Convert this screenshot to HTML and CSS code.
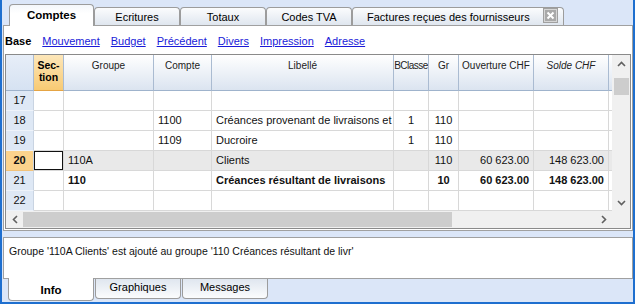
FILE: index.html
```html
<!DOCTYPE html>
<html lang="fr">
<head>
    <meta charset="UTF-8">
    <title>Comptes</title>
    <link rel="stylesheet" href="styles.css">
</head>
<body>
    <div class="window">
        <div class="tabs">
            <div class="tab active">Comptes</div>
            <div class="tab">Ecritures</div>
            <div class="tab">Totaux</div>
            <div class="tab">Codes TVA</div>
            <div class="tab wide">
                <span class="tab-label">Factures reçues des fournisseurs</span>
                <span class="close">
                    <svg width="9" height="9" viewBox="0 0 9 9"><path d="M1.5 1.5 L7.5 7.5 M7.5 1.5 L1.5 7.5" stroke="#fff" stroke-width="2"/></svg>
                </span>
            </div>
        </div>

        <div class="panel">
            <div class="links">
                <b>Base</b>
                <a href="#">Mouvement</a>
                <a href="#">Budget</a>
                <a href="#">Précédent</a>
                <a href="#">Divers</a>
                <a href="#">Impression</a>
                <a href="#">Adresse</a>
            </div>

            <div class="grid">
                <div class="grid-main">
                    <div class="sheet">
                        <div class="row head">
                            <div class="cell rh"></div>
                            <div class="cell sect"><b>Sec-<br>tion</b></div>
                            <div class="cell">Groupe</div>
                            <div class="cell">Compte</div>
                            <div class="cell">Libellé</div>
                            <div class="cell narrow">BClasse</div>
                            <div class="cell">Gr</div>
                            <div class="cell">Ouverture CHF</div>
                            <div class="cell"><i>Solde CHF</i></div>
                            <div class="cell fill"></div>
                        </div>
                        <div class="row">
                            <div class="cell rh">17</div>
                            <div class="cell"></div>
                            <div class="cell"></div>
                            <div class="cell"></div>
                            <div class="cell"></div>
                            <div class="cell c"></div>
                            <div class="cell c"></div>
                            <div class="cell r"></div>
                            <div class="cell r"></div>
                            <div class="cell fill"></div>
                        </div>
                        <div class="row">
                            <div class="cell rh">18</div>
                            <div class="cell"></div>
                            <div class="cell"></div>
                            <div class="cell">1100</div>
                            <div class="cell">Créances provenant de livraisons et</div>
                            <div class="cell c">1</div>
                            <div class="cell c">110</div>
                            <div class="cell r"></div>
                            <div class="cell r"></div>
                            <div class="cell fill"></div>
                        </div>
                        <div class="row">
                            <div class="cell rh">19</div>
                            <div class="cell"></div>
                            <div class="cell"></div>
                            <div class="cell">1109</div>
                            <div class="cell">Ducroire</div>
                            <div class="cell c">1</div>
                            <div class="cell c">110</div>
                            <div class="cell r"></div>
                            <div class="cell r"></div>
                            <div class="cell fill"></div>
                        </div>
                        <div class="row current">
                            <div class="cell rh">20</div>
                            <div class="cell cursor"></div>
                            <div class="cell">110A</div>
                            <div class="cell"></div>
                            <div class="cell">Clients</div>
                            <div class="cell c"></div>
                            <div class="cell c">110</div>
                            <div class="cell r">60 623.00</div>
                            <div class="cell r">148 623.00</div>
                            <div class="cell fill"></div>
                        </div>
                        <div class="row total">
                            <div class="cell rh">21</div>
                            <div class="cell"></div>
                            <div class="cell">110</div>
                            <div class="cell"></div>
                            <div class="cell">Créances résultant de livraisons</div>
                            <div class="cell c"></div>
                            <div class="cell c">10</div>
                            <div class="cell r">60 623.00</div>
                            <div class="cell r">148 623.00</div>
                            <div class="cell fill"></div>
                        </div>
                        <div class="row">
                            <div class="cell rh">22</div>
                            <div class="cell"></div>
                            <div class="cell"></div>
                            <div class="cell"></div>
                            <div class="cell"></div>
                            <div class="cell c"></div>
                            <div class="cell c"></div>
                            <div class="cell r"></div>
                            <div class="cell r"></div>
                            <div class="cell fill"></div>
                        </div>
                    </div>
                    <div class="vscroll">
                        <span class="arrow">
                            <svg width="9" height="6" viewBox="0 0 9 6"><polyline points="1,5 4.5,1.5 8,5" fill="none" stroke="#606060" stroke-width="1.6"/></svg>
                        </span>
                        <span class="vthumb"></span>
                        <span class="spacer"></span>
                        <span class="arrow">
                            <svg width="9" height="6" viewBox="0 0 9 6"><polyline points="1,1 4.5,4.5 8,1" fill="none" stroke="#606060" stroke-width="1.6"/></svg>
                        </span>
                    </div>
                </div>
                <div class="hscroll-row">
                    <div class="hscroll">
                        <span class="arrow">
                            <svg width="6" height="9" viewBox="0 0 6 9"><polyline points="5,1 1.5,4.5 5,8" fill="none" stroke="#606060" stroke-width="1.6"/></svg>
                        </span>
                        <span class="hthumb"></span>
                        <span class="spacer"></span>
                        <span class="arrow">
                            <svg width="6" height="9" viewBox="0 0 6 9"><polyline points="1,1 4.5,4.5 1,8" fill="none" stroke="#606060" stroke-width="1.6"/></svg>
                        </span>
                    </div>
                    <div class="corner"></div>
                </div>
            </div>
        </div>

        <div class="info">Groupe '110A Clients' est ajouté au groupe '110 Créances résultant de livr'</div>

        <div class="bottom-tabs">
            <div class="btab active">Info</div>
            <div class="btab">Graphiques</div>
            <div class="btab">Messages</div>
        </div>
    </div>
</body>
</html>
```

FILE: styles.css
```css
* {
    box-sizing: border-box;
    margin: 0;
    padding: 0;
}

body {
    font-family: 'Liberation Sans', Arial, sans-serif;
    font-size: 11px;
    color: #111;
    background: #dbe6f8;
}

.window {
    width: 635px;
    height: 304px;
    border: 2px solid #1e6fcf;
    border-top: none;
    background: #dbe6f8;
    padding-top: 4px;
    overflow: hidden;
}

/* top tabs */
.tabs {
    display: flex;
    align-items: flex-end;
    height: 21px;
    padding-left: 7px;
    position: relative;
    z-index: 1;
}

.tab {
    width: 86px;
    height: 18px;
    border: 1px solid #9c9c9c;
    border-bottom: none;
    border-radius: 4px 4px 0 0;
    background: linear-gradient(#fbfcfd, #dfe6ef);
    text-align: center;
    line-height: 18px;
    font-size: 11px;
    color: #000;
}

.tab.active {
    width: 85px;
    height: 22px;
    margin-bottom: -1px;
    background: linear-gradient(#f4f7fb, #fff 40%);
    font-weight: bold;
    font-size: 11.5px;
    line-height: 21px;
}

.tab.wide {
    width: 212px;
    display: flex;
    align-items: flex-start;
    padding: 0 6px 0 14px;
}

.tab-label {
    flex: 1;
    text-align: left;
}

.close {
    display: flex;
    align-items: center;
    justify-content: center;
    width: 13px;
    height: 13px;
    margin-top: 1px;
    background: #a9a9a9;
    border: 1px solid #d6d6d6;
    box-shadow: 0 0 0 1px #a0a0a0;
}

/* main panel */
.panel {
    margin-left: 1px;
    height: 206px;
    background: #fff;
    border: 1px solid #a0a0a0;
    display: flex;
    flex-direction: column;
}

.links {
    height: 28px;
    display: flex;
    align-items: center;
    gap: 11px;
    padding: 2px 0 0 1px;
}

.links b {
    color: #000;
}

.links a {
    color: #1a1ad8;
    text-decoration: underline;
}

.grid {
    margin: 0 1px 1px 1px;
    border: 1px solid #8a8a8a;
    flex: 1;
    display: flex;
    flex-direction: column;
}

.grid-main {
    display: flex;
}

.sheet {
    width: 606px;
}

.row {
    display: grid;
    grid-template-columns: 28px 30px 90px 58px 182px 35px 30px 75px 75px 3px;
    height: 20px;
}

.cell {
    border-right: 1px solid #d8d8d8;
    border-bottom: 1px solid #d8d8d8;
    padding: 0 4px;
    line-height: 19px;
    white-space: nowrap;
    overflow: hidden;
}

.cell.c {
    text-align: center;
}

.cell.r {
    text-align: right;
}

.cell.fill {
    border-right: none;
}

.cell.rh {
    background: #dee8f5;
    border-right-color: #c9d4e2;
    border-bottom-color: #eef3fa;
    text-align: center;
    padding: 0;
}

.row.head {
    height: 36px;
}

.row.head .cell {
    background: linear-gradient(#fff, #dbe4f0);
    border-right-color: #aabbd1;
    border-bottom-color: #9fb3cc;
    text-align: center;
    font-size: 10px;
    line-height: 12px;
    padding: 5px 0 0;
    color: #222;
}

.row.head .cell.narrow {
    letter-spacing: -0.5px;
}

.row.head .cell.rh {
    background: linear-gradient(#e7eef8, #d6e2f2);
}

.row.head .cell.sect {
    background: linear-gradient(#fde7ba, #f8ca73);
    border-bottom-color: #e5a444;
    font-size: 10.5px;
    padding-top: 4px;
    color: #000;
}

.row.current .cell {
    background: #e9e9e9;
}

.row.current .cell.rh {
    background: #fcd38c;
    font-weight: bold;
    border-bottom-color: #f1c27a;
}

.row.current .cell.cursor {
    background: #fff;
    box-shadow: inset 0 0 0 1px #111;
}

.row.total .cell {
    font-weight: bold;
}

.row.total .cell.rh {
    font-weight: normal;
}

/* scroll bars */
.vscroll {
    flex: 1;
    display: flex;
    flex-direction: column;
    align-items: center;
    background: #f0f0f0;
}

.arrow {
    width: 17px;
    height: 17px;
    display: flex;
    align-items: center;
    justify-content: center;
}

.vthumb {
    width: 15px;
    height: 17px;
    margin-top: 6px;
    background: #cdcdcd;
}

.spacer {
    flex: 1;
}

.hscroll-row {
    display: flex;
    height: 17px;
}

.hscroll {
    width: 606px;
    display: flex;
    align-items: center;
    background: #f0f0f0;
}

.hthumb {
    width: 429px;
    height: 15px;
    background: #cdcdcd;
}

.corner {
    flex: 1;
    background: #f0f0f0;
}

/* info box */
.info {
    margin: 6px 0 0 1px;
    height: 42px;
    background: #fff;
    border: 1px solid #a0a0a0;
    padding: 7px 0 0 5px;
    font-size: 10.5px;
}

.bottom-tabs {
    display: flex;
    padding-left: 6px;
    gap: 1px;
    margin-top: -1px;
}

.btab {
    width: 86px;
    height: 20px;
    margin-top: 1px;
    border: 1px solid #9c9c9c;
    border-top: none;
    border-radius: 0 0 4px 4px;
    background: linear-gradient(#dfe6ef, #fbfcfd);
    text-align: center;
    line-height: 17px;
    color: #000;
}

.btab.active {
    height: 23px;
    margin-top: 0;
    background: #fff;
    font-weight: bold;
    font-size: 11.5px;
    line-height: 24px;
}
```
